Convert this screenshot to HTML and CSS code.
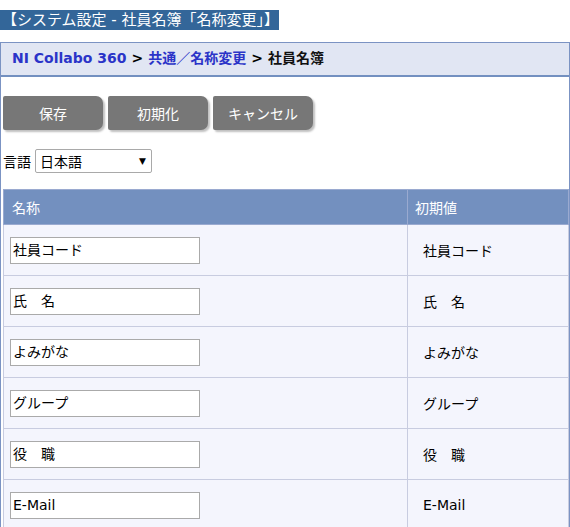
FILE: index.html
```html
<!DOCTYPE html>
<html lang="ja">
<head>
<meta charset="utf-8">
<link rel="stylesheet" href="styles.css">
</head>
<body>
<div class="title">【システム設定 - 社員名簿「名称変更」】</div>
<div class="panel">
  <div class="crumb">
    <a class="home">NI Collabo 360</a><span class="sep">&gt;</span><a class="link">共通／名称変更</a><span class="sep">&gt;</span><span class="cur">社員名簿</span>
  </div>
  <div class="content">
    <div class="buttons">
      <button class="btn">保存</button>
      <button class="btn">初期化</button>
      <button class="btn">キャンセル</button>
    </div>
    <div class="lang">
      <span class="lang-label">言語</span>
      <div class="select"><span>日本語</span><span class="arrow">▼</span></div>
    </div>
    <table class="grid">
      <thead>
        <tr><th class="c1">名称</th><th class="c2">初期値</th></tr>
      </thead>
      <tbody>
        <tr><td class="c1"><div class="input">社員コード</div></td><td class="c2">社員コード</td></tr>
        <tr><td class="c1"><div class="input">氏　名</div></td><td class="c2">氏　名</td></tr>
        <tr><td class="c1"><div class="input">よみがな</div></td><td class="c2">よみがな</td></tr>
        <tr><td class="c1"><div class="input">グループ</div></td><td class="c2">グループ</td></tr>
        <tr><td class="c1"><div class="input">役　職</div></td><td class="c2">役　職</td></tr>
        <tr><td class="c1"><div class="input">E-Mail</div></td><td class="c2">E-Mail</td></tr>
      </tbody>
    </table>
  </div>
</div>
</body>
</html>
```
FILE: styles.css
```css
html, body {
  margin: 0;
  padding: 0;
  background: #ffffff;
}
body {
  font-family: "DejaVu Sans", "Noto Sans CJK JP", sans-serif;
  font-size: 14px;
  color: #000;
}
.title {
  display: block;
  margin-top: 10px;
  height: 20px;
  line-height: 20px;
  padding: 0 4px 0 2px;
  width: 273px;
  background: #336699;
  color: #ffffff;
  font-size: 15px;
  white-space: nowrap;
  overflow: hidden;
}
.panel {
  margin-top: 12px;
  width: 568px;
  height: 485px;
  border: 1px solid #7b93c3;
  border-bottom: none;
  overflow: hidden;
}
.crumb {
  height: 32px;
  line-height: 31px;
  background: #e1e6f3;
  border-bottom: 2px solid #7390c0;
  padding-left: 11px;
  font-weight: bold;
  white-space: nowrap;
}
.crumb .home, .crumb .link {
  color: #2b34c8;
}
.crumb .sep {
  margin: 0 5px 0 5px;
  color: #000;
}
.crumb .cur {
  color: #111;
}
.content {
  padding: 19px 0 0 2px;
}
.buttons {
  display: flex;
  gap: 5px;
}
.btn {
  width: 100px;
  height: 34px;
  border: none;
  border-radius: 2px 7px 7px 2px;
  background: #777777;
  color: #ffffff;
  font-family: "DejaVu Sans", "Noto Sans CJK JP", sans-serif;
  font-size: 14px;
  box-shadow: 2px 2px 2px rgba(0,0,0,0.25);
  padding: 0;
}
.lang {
  display: flex;
  align-items: center;
  margin-top: 19px;
  gap: 4px;
}
.select {
  display: flex;
  justify-content: space-between;
  align-items: center;
  box-sizing: border-box;
  width: 117px;
  height: 24px;
  border: 1px solid #a9a9a9;
  border-radius: 2px;
  padding: 0 5px 0 4px;
  background: #fff;
}
.select .arrow {
  font-size: 9px;
}
.grid {
  margin-top: 16px;
  border-collapse: collapse;
  width: 566px;
}
.grid th, .grid td {
  border: 1px solid #c8cce0;
  padding: 0;
  text-align: left;
}
.grid th {
  background: #7390bf;
  color: #fff;
  font-weight: normal;
  height: 34px;
  border-color: #9aaad0;
  padding-left: 8px;
}
.grid th.c2 {
  padding-left: 7px;
}
.grid td {
  background: #f4f5fd;
  height: 50px;
}
.grid th.c1 {
  width: 395px;
}
.grid td.c1 {
  padding-left: 6px;
}
.grid td.c2 {
  padding-left: 15px;
}
.input {
  box-sizing: border-box;
  width: 190px;
  height: 27px;
  line-height: 25px;
  border: 1px solid #aaaaaa;
  background: #fff;
  padding-left: 2px;
}
```
